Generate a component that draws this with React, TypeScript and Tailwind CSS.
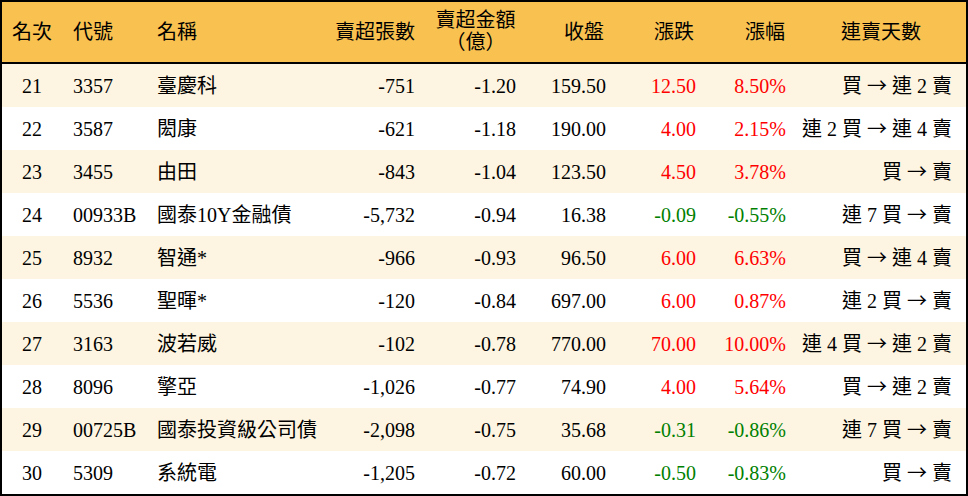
import React from "react";

type Row = {
  rank: string;
  code: string;
  name: string;
  vol: string;
  amt: string;
  close: string;
  chg: string;
  pct: string;
  days: string;
};

const rows: Row[] = [
  { rank: "21", code: "3357", name: "臺慶科", vol: "-751", amt: "-1.20", close: "159.50", chg: "12.50", pct: "8.50%", days: "買 → 連 2 賣" },
  { rank: "22", code: "3587", name: "閎康", vol: "-621", amt: "-1.18", close: "190.00", chg: "4.00", pct: "2.15%", days: "連 2 買 → 連 4 賣" },
  { rank: "23", code: "3455", name: "由田", vol: "-843", amt: "-1.04", close: "123.50", chg: "4.50", pct: "3.78%", days: "買 → 賣" },
  { rank: "24", code: "00933B", name: "國泰10Y金融債", vol: "-5,732", amt: "-0.94", close: "16.38", chg: "-0.09", pct: "-0.55%", days: "連 7 買 → 賣" },
  { rank: "25", code: "8932", name: "智通*", vol: "-966", amt: "-0.93", close: "96.50", chg: "6.00", pct: "6.63%", days: "買 → 連 4 賣" },
  { rank: "26", code: "5536", name: "聖暉*", vol: "-120", amt: "-0.84", close: "697.00", chg: "6.00", pct: "0.87%", days: "連 2 買 → 賣" },
  { rank: "27", code: "3163", name: "波若威", vol: "-102", amt: "-0.78", close: "770.00", chg: "70.00", pct: "10.00%", days: "連 4 買 → 連 2 賣" },
  { rank: "28", code: "8096", name: "擎亞", vol: "-1,026", amt: "-0.77", close: "74.90", chg: "4.00", pct: "5.64%", days: "買 → 連 2 賣" },
  { rank: "29", code: "00725B", name: "國泰投資級公司債", vol: "-2,098", amt: "-0.75", close: "35.68", chg: "-0.31", pct: "-0.86%", days: "連 7 買 → 賣" },
  { rank: "30", code: "5309", name: "系統電", vol: "-1,205", amt: "-0.72", close: "60.00", chg: "-0.50", pct: "-0.83%", days: "買 → 賣" },
];

const grid =
  "grid grid-cols-[60px_85px_183px_95px_101px_90px_90px_90px_170px]";

function Days({ text }: { text: string }) {
  const [a, b] = text.split(" → ");
  return (
    <span className="whitespace-pre">
      {a}{" "}
      <span style={{ fontFamily: '"Noto Sans CJK TC", sans-serif' }} className="text-[20px]">→</span>
      {" "}{b}
    </span>
  );
}

export default function App() {
  return (
    <div
      className="w-[968px] h-[496px] bg-white border-2 border-black text-[20px] text-black"
      style={{ fontFamily: '"Liberation Serif", "Noto Sans CJK TC", serif' }}
    >
      <div className={`${grid} h-[62px] bg-[#f8c150] border-b-2 border-black items-center leading-none`}>
        <div className="text-center">名次</div>
        <div className="pl-[11px]">代號</div>
        <div className="pl-[10px]">名稱</div>
        <div className="text-right pr-[10px]">賣超張數</div>
        <div className="text-center leading-[22px] pb-[2px]">
          <div>賣超金額</div>
          <div>（億）</div>
        </div>
        <div className="text-right pr-[12px]">收盤</div>
        <div className="text-right pr-[12px]">漲跌</div>
        <div className="text-right pr-[11px]">漲幅</div>
        <div className="text-center">連賣天數</div>
      </div>
      {rows.map((r, i) => {
        const up = !r.chg.startsWith("-");
        const color = up ? "text-[#ff0000]" : "text-[#008000]";
        return (
          <div
            key={r.rank}
            className={`${grid} h-[43px] items-center leading-none ${i % 2 === 0 ? "bg-[#fdf5e1]" : "bg-white"}`}
          >
            <div className="text-center">{r.rank}</div>
            <div className="pl-[11px]">{r.code}</div>
            <div className="pl-[10px] whitespace-nowrap">{r.name}</div>
            <div className="text-right pr-[10px]">{r.vol}</div>
            <div className="text-right pr-[10px]">{r.amt}</div>
            <div className="text-right pr-[10px]">{r.close}</div>
            <div className={`text-right pr-[10px] ${color}`}>{r.chg}</div>
            <div className={`text-right pr-[10px] ${color}`}>{r.pct}</div>
            <div className="text-right pr-[14px] whitespace-pre">
              <Days text={r.days} />
            </div>
          </div>
        );
      })}
    </div>
  );
}
